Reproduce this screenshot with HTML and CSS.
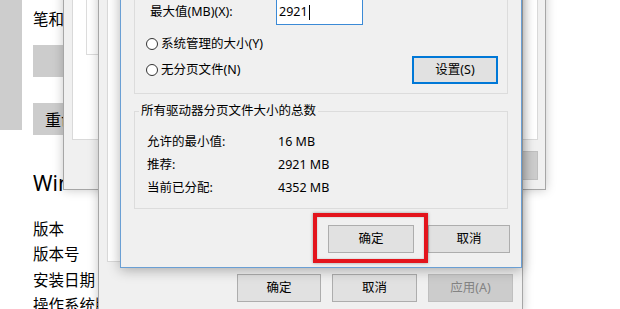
FILE: index.html
```html
<!DOCTYPE html>
<html lang="zh-CN">
<head>
<meta charset="utf-8">
<title>虚拟内存</title>
<link rel="stylesheet" href="styles.css">
</head>
<body>
<div class="desk">
  <main class="settings">
    <div class="nav-strip"></div>
    <div class="settings-body">
      <p class="pen">笔和触控</p>
      <div class="s-btn"></div>
      <div class="s-btn">重命名</div>
      <h2 class="spec-title">Windows</h2>
      <ul class="spec-list">
        <li>版本</li>
        <li>版本号</li>
        <li>安装日期</li>
        <li>操作系统版本</li>
      </ul>
    </div>
  </main>

  <div class="win win-sys">
    <div class="tab-panel"><div class="tab-group"></div></div>
    <div class="btn-row"><button class="btn btn-disabled tall"></button></div>
  </div>

  <div class="win win-perf">
    <div class="tab-panel"></div>
    <div class="btn-row perf-buttons">
      <button class="btn w84">确定</button>
      <button class="btn">取消</button>
      <button class="btn btn-disabled">应用(A)</button>
    </div>
  </div>

  <div class="win win-vm">
    <div class="group group-drive">
      <div class="field-row"><label>最大值(MB)(X):</label><span class="edit focus">2921<i class="caret"></i></span></div>
      <div class="radio-row"><span class="radio"></span>系统管理的大小(Y)</div>
      <div class="radio-row set-row"><span class="radio-label"><span class="radio"></span>无分页文件(N)</span><button class="btn btn-default">设置(S)</button></div>
    </div>
    <fieldset class="group group-total">
      <legend>所有驱动器分页文件大小的总数</legend>
      <dl class="totals">
        <dt>允许的最小值:</dt><dd>16 MB</dd>
        <dt>推荐:</dt><dd>2921 MB</dd>
        <dt>当前已分配:</dt><dd>4352 MB</dd>
      </dl>
    </fieldset>
    <div class="btn-row vm-buttons">
      <button class="btn ok">确定</button>
      <button class="btn cancel">取消</button>
    </div>
  </div>

  <div class="highlight"></div>
</div>
</body>
</html>
```

FILE: styles.css
```css
* { box-sizing: border-box; }
html, body { margin: 0; padding: 0; }
body {
  width: 620px;
  height: 309px;
  overflow: hidden;
  background: #fff;
  font-family: "Noto Sans", "Noto Sans CJK SC", sans-serif;
  color: #000;
}
.desk {
  position: relative;
  width: 620px;
  height: 309px;
  overflow: hidden;
}

/* ---------- Settings page (background) ---------- */
.settings {
  display: grid;
  grid-template-columns: 22px 76px;
  height: 309px;
}
.nav-strip {
  height: 130px;
  background: #cdcdcd;
}
.settings-body {
  padding-left: 11px;
  overflow: hidden;
  font-family: "Noto Sans CJK SC", sans-serif;
  font-size: 15.5px;
  white-space: nowrap;
}
.pen {
  margin: 8px 0 0;
  line-height: 20px;
}
.s-btn {
  margin-top: 17px;
  width: 220px;
  height: 32px;
  background: #cccccc;
  line-height: 32px;
  padding-left: 12px;
  font-size: 16px;
}
.s-btn + .s-btn { margin-top: 26px; }
.spec-title {
  margin: 33px 0 0;
  width: 30px;
  overflow: hidden;
  font-family: "Noto Sans", "Noto Sans CJK SC", sans-serif;
  font-weight: 400;
  font-size: 21px;
  line-height: 30px;
}
.spec-list {
  list-style: none;
  margin: 17.5px 0 0;
  padding: 0;
  line-height: 25.6px;
}

/* ---------- Windows ---------- */
.win {
  position: absolute;
  display: flex;
  flex-direction: column;
  background: #f0f0f0;
  font-size: 12.5px;
  line-height: 16px;
}
.win-sys {
  left: 63px;
  top: -40px;
  width: 483px;
  height: 230px;
  border: 1px solid #a6a6a6;
  padding: 8px 7px 9px 8px;
  box-shadow: 0 0 10px rgba(0, 0, 0, 0.22);
}
.win-perf {
  left: 98px;
  top: -40px;
  width: 425px;
  height: 353px;
  border: 1px solid #a6a6a6;
  padding: 8px 9px 10px 8px;
  box-shadow: 0 0 10px rgba(0, 0, 0, 0.22);
}
.win-vm {
  left: 120px;
  top: -40px;
  width: 402px;
  border: 1px solid #6a9fd4;
  padding: 5px 11px 14px 13px;
  box-shadow: 0 2px 12px rgba(0, 0, 0, 0.3);
}

.tab-panel {
  flex: 1;
  background: #fff;
  border: 1px solid #d9d9d9;
  padding-left: 13px;
}
.tab-group {
  width: 300px;
  height: 85px;
  border: 1px solid #dcdcdc;
}

.btn-row {
  display: flex;
  justify-content: flex-end;
  margin-top: 11px;
}
.perf-buttons {
  margin-top: 12px;
  gap: 11px;
}
.btn {
  font: inherit;
  color: #000;
  background: #e1e1e1;
  border: 1px solid #adadad;
  padding: 0;
  height: 28px;
  width: 85px;
  line-height: 16px;
}
.btn.w84 { width: 84px; }
.btn.tall { height: 29px; }
.btn-disabled {
  background: #cccccc;
  border-color: #bfbfbf;
  color: #838383;
}
.btn-default {
  width: 86px;
  border: 2px solid #0078d7;
}

/* ---------- Virtual memory dialog ---------- */
.group {
  border: 1px solid #dcdcdc;
  margin: 0 2px 0 0;
}
.group-drive {
  padding: 32px 9px 9px 11px;
}
.field-row {
  display: flex;
  align-items: center;
  height: 26px;
  padding-left: 4px;
}
.field-row label { width: 126px; }
.edit {
  display: flex;
  align-items: center;
  width: 87px;
  height: 26px;
  background: #fff;
  border: 1px solid #3b8ad6;
  padding-left: 2px;
}
.caret {
  display: inline-block;
  width: 1px;
  height: 15px;
  background: #000;
  margin-left: 1px;
}
.radio-row {
  display: flex;
  align-items: center;
  height: 20px;
  margin-top: 9px;
}
.radio-label {
  display: flex;
  align-items: center;
}
.radio {
  display: inline-block;
  width: 12px;
  height: 12px;
  border: 1px solid #333;
  border-radius: 50%;
  background: #fff;
  margin-right: 3px;
}
.set-row {
  height: 28px;
  margin-top: 2px;
  justify-content: space-between;
}

.group-total {
  margin: 9px 2px 0 0;
  padding: 11px 0 9px 12px;
  min-width: 0;
}
.group-total legend {
  padding: 0 2px;
  margin-left: -8px;
  line-height: 16px;
  height: 16px;
}
.totals {
  display: grid;
  grid-template-columns: 131px auto;
  grid-auto-rows: 23px;
  align-items: center;
  margin: 0;
}
.totals dd { margin: 0; }

.vm-buttons {
  margin-top: 16px;
  gap: 14px;
}
.btn.ok { width: 86px; }
.btn.cancel { width: 82px; }

/* ---------- Annotation ---------- */
.highlight {
  position: absolute;
  left: 313px;
  top: 213px;
  width: 115px;
  height: 50px;
  border: 4px solid #e3141c;
  box-shadow: 0 0 3px rgba(0, 0, 0, 0.35), inset 0 0 2px rgba(0, 0, 0, 0.25);
}
```
